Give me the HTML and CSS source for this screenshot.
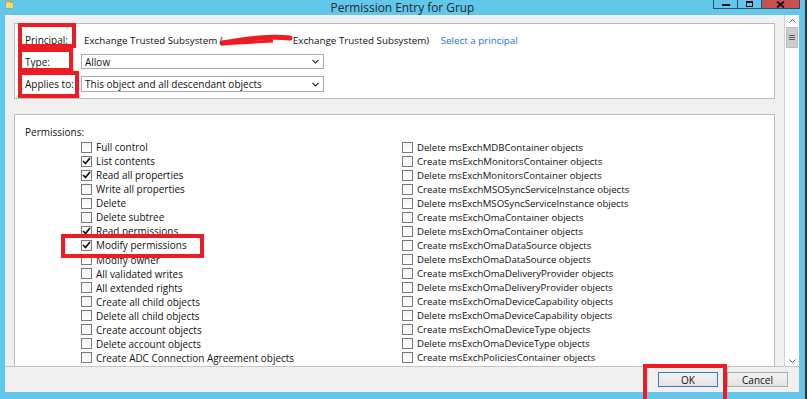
FILE: index.html
```html
<!DOCTYPE html>
<html lang="en">
<head>
    <meta charset="UTF-8">
    <title>Permission Entry for Grup</title>
    <link rel="stylesheet" href="styles.css">
</head>
<body>
    <div class="window">
        <div class="titlebar">
            <div class="title-left">
                <svg class="folder" width="9" height="9" viewBox="0 0 9 9">
                    <path d="M1 1h3l1 1h3v6H1z" fill="#e8c35a" stroke="#b08a2a" stroke-width="0.6"/>
                    <path d="M1 3h7v5H1z" fill="#f5d77a"/>
                </svg>
            </div>
            <div class="title">Permission Entry for Grup</div>
            <div class="caption">
                <div class="cap-btn cap-min"><span></span></div>
                <div class="cap-btn cap-max"><span></span></div>
                <div class="cap-btn cap-close">
                    <svg width="9" height="7" viewBox="0 0 9 7"><path d="M1 0.5l7 6M8 0.5l-7 6" stroke="#111" stroke-width="1.8"/></svg>
                </div>
            </div>
        </div>

        <div class="client">
            <div class="scroll">
                <div class="scroll-content">
                    <div class="group top-group">
                        <div class="field-label">Principal:</div>
                        <div class="principal">
                            Exchange Trusted Subsystem (<span class="redacted"><svg width="74" height="13" viewBox="0 0 74 13"><path d="M3 9c12-2 24-4 37-5 11-1 21-1 31 0" stroke="#ed1c24" stroke-width="5" fill="none" stroke-linecap="round"/><path d="M2 10c16-1 34-2 52-3" stroke="#ed1c24" stroke-width="3" fill="none"/></svg></span>Exchange Trusted Subsystem)
                            <a class="link" href="#">Select a principal</a>
                        </div>

                        <div class="field-label">Type:</div>
                        <div class="combo">
                            <span>Allow</span>
                            <svg width="7" height="5" viewBox="0 0 7 5"><path d="M0.5 0.8l3 3 3-3" stroke="#222" stroke-width="1.2" fill="none"/></svg>
                        </div>

                        <div class="field-label">Applies to:</div>
                        <div class="combo">
                            <span>This object and all descendant objects</span>
                            <svg width="7" height="5" viewBox="0 0 7 5"><path d="M0.5 0.8l3 3 3-3" stroke="#222" stroke-width="1.2" fill="none"/></svg>
                        </div>
                    </div>

                    <div class="group perm-group">
                        <div class="perm-title">Permissions:</div>
                        <div class="perm-list">
                            <div class="perm-col perm-col-left" id="leftCol"></div>
                            <div class="perm-col perm-col-right" id="rightCol"></div>
                        </div>
                    </div>
                </div>

                <div class="scrollbar">
                    <div class="sb-arrow">
                        <svg width="7" height="4" viewBox="0 0 7 4"><path d="M0.5 3.5l3-3 3 3" stroke="#555" fill="none"/></svg>
                    </div>
                    <div class="sb-thumb"><span></span><span></span><span></span></div>
                    <div class="sb-track"></div>
                    <div class="sb-arrow">
                        <svg width="7" height="4" viewBox="0 0 7 4"><path d="M0.5 0.5l3 3 3-3" stroke="#555" fill="none"/></svg>
                    </div>
                </div>
            </div>

            <div class="footer">
                <button class="btn btn-default">OK</button>
                <button class="btn">Cancel</button>
            </div>
        </div>

        <div class="mark mark-principal"></div>
        <div class="mark mark-type"></div>
        <div class="mark mark-applies"></div>
        <div class="mark mark-modify"></div>
        <div class="mark mark-ok"></div>
    </div>

    <script>
        const left = [
            ['Full control', false],
            ['List contents', true],
            ['Read all properties', true],
            ['Write all properties', false],
            ['Delete', false],
            ['Delete subtree', false],
            ['Read permissions', true],
            ['Modify permissions', true],
            ['Modify owner', false],
            ['All validated writes', false],
            ['All extended rights', false],
            ['Create all child objects', false],
            ['Delete all child objects', false],
            ['Create account objects', false],
            ['Delete account objects', false],
            ['Create ADC Connection Agreement objects', false]
        ];
        const right = [
            'Delete msExchMDBContainer objects',
            'Create msExchMonitorsContainer objects',
            'Delete msExchMonitorsContainer objects',
            'Create msExchMSOSyncServiceInstance objects',
            'Delete msExchMSOSyncServiceInstance objects',
            'Create msExchOmaContainer objects',
            'Delete msExchOmaContainer objects',
            'Create msExchOmaDataSource objects',
            'Delete msExchOmaDataSource objects',
            'Create msExchOmaDeliveryProvider objects',
            'Delete msExchOmaDeliveryProvider objects',
            'Create msExchOmaDeviceCapability objects',
            'Delete msExchOmaDeviceCapability objects',
            'Create msExchOmaDeviceType objects',
            'Delete msExchOmaDeviceType objects',
            'Create msExchPoliciesContainer objects'
        ];

        const tick = '<svg width="9" height="8" viewBox="0 0 9 8"><path d="M1 4l2.5 2.5L8 1" stroke="#111" stroke-width="1.7" fill="none"/></svg>';

        function row(label, checked) {
            return '<div class="perm-row"><span class="check">' + (checked ? tick : '') +
                '</span><span>' + label + '</span></div>';
        }

        document.getElementById('leftCol').innerHTML = left.map(i => row(i[0], i[1])).join('');
        document.getElementById('rightCol').innerHTML = right.map(i => row(i, false)).join('');
    </script>
</body>
</html>
```

FILE: styles.css
```css
body {
    margin: 0;
    font-family: "Open Sans", "Noto Sans", sans-serif;
    font-size: 10px;
    color: #111;
    background: #fff;
}

.window {
    position: relative;
    width: 807px;
    height: 399px;
    box-sizing: border-box;
    padding: 0 6px 7px 5px;
    background-color: #62c7ea;
    border-right: 2px solid #2f3a3f;
    display: flex;
    flex-direction: column;
    overflow: hidden;
}

/* title bar */
.titlebar {
    height: 15px;
    margin: 0 -1px 0 -5px;
    padding-left: 5px;
    display: grid;
    grid-template-columns: 1fr auto 1fr;
    align-items: start;
}

.folder {
    display: block;
}

.title {
    font-size: 11.9px;
    line-height: 14px;
    color: #1d2a30;
}

.caption {
    display: flex;
    justify-content: flex-end;
}

.cap-btn {
    height: 8px;
    border: 1px solid #2e4f5c;
    border-top: none;
    display: flex;
    align-items: center;
    justify-content: center;
    box-sizing: content-box;
}

.cap-min,
.cap-max {
    width: 23px;
    border-right: none;
}

.cap-min span {
    width: 8px;
    height: 2px;
    background: #111;
    margin-top: 2px;
}

.cap-max span {
    width: 5px;
    height: 3px;
    border: 1px solid #111;
    border-top-width: 2px;
}

.cap-close {
    width: 37px;
    background: #c75050;
}

/* client area */
.client {
    flex: 1;
    background-color: #f0f0f0;
    display: flex;
    flex-direction: column;
}

.scroll {
    height: 351px;
    display: flex;
    overflow: hidden;
    border-bottom: 1px solid #c4c4c4;
}

.scroll-content {
    flex: 1;
    padding: 8px 9px 0 9px;
}

.group {
    background-color: #fff;
    border: 1px solid #bcbcbc;
}

.top-group {
    box-sizing: content-box;
    padding: 9px 0 0 10px;
    height: 65px;
    display: grid;
    grid-template-columns: 56px 1fr;
    grid-template-rows: 14px 15px 16px;
    row-gap: 7px;
    align-items: center;
}

.principal {
    padding-left: 3px;
    white-space: nowrap;
    font-size: 9.8px;
}

.redacted {
    display: inline-block;
    width: 74px;
    height: 13px;
    vertical-align: -3px;
    margin-left: -4px;
}

.redacted svg {
    display: block;
}

.link {
    color: #2a6fd6;
    text-decoration: none;
    margin-left: 9px;
}

.combo {
    width: 243px;
    height: 100%;
    box-sizing: border-box;
    border: 1px solid #acacac;
    padding: 0 4px 0 3px;
    display: flex;
    align-items: center;
    justify-content: space-between;
}

.perm-group {
    margin-top: 15px;
    height: 300px;
    padding: 10px 0 0 10px;
}

.perm-title {
    line-height: 15px;
}

.perm-list {
    display: flex;
    margin-left: 56px;
}

.perm-col {
    width: 321px;
    display: flex;
    flex-direction: column;
}

.perm-col-left {
    font-size: 9.95px;
}

.perm-col-right {
    font-size: 9.6px;
}

.perm-row {
    height: 14.07px;
    display: flex;
    align-items: center;
    gap: 4px;
    white-space: nowrap;
}

.check {
    width: 9px;
    height: 9px;
    border: 1px solid #7a7a7a;
    background: linear-gradient(#f4f4f4, #ffffff);
    display: flex;
    align-items: center;
    justify-content: center;
    flex-shrink: 0;
}

/* scrollbar */
.scrollbar {
    width: 14px;
    background-color: #fff;
    border-left: 1px solid #d0d0d0;
    display: flex;
    flex-direction: column;
    padding-top: 1px;
}

.sb-arrow {
    height: 10px;
    display: flex;
    align-items: center;
    justify-content: center;
}

.sb-thumb {
    margin: 1px 1px 0 1px;
    height: 21px;
    background-color: #cdcdcd;
    border: 1px solid #bcbcbc;
    box-sizing: border-box;
    display: flex;
    flex-direction: column;
    align-items: center;
    justify-content: center;
    gap: 1px;
}

.sb-thumb span {
    width: 6px;
    height: 1px;
    background: #606060;
}

.sb-track {
    flex: 1;
}

/* footer */
.footer {
    flex: 1;
    display: flex;
    justify-content: flex-end;
    align-items: center;
    gap: 9px;
    padding-right: 11px;
}

.btn {
    font-family: inherit;
    font-size: 10px;
    width: 60px;
    height: 15px;
    padding: 0;
    border: 1px solid #acacac;
    background: linear-gradient(#f2f2f2, #e3e3e3);
    color: #111;
}

.btn + .btn {
    width: 61px;
}

.btn-default {
    border-color: #3c7fb1;
}

/* red annotation boxes */
.mark {
    position: absolute;
    border: 4px solid #ed1c24;
    box-sizing: border-box;
}

.mark-principal { left: 18px; top: 23px; width: 58px; height: 25px; }
.mark-type { left: 18px; top: 48px; width: 55px; height: 24px; }
.mark-applies { left: 18px; top: 71px; width: 61px; height: 27px; }
.mark-modify { left: 61px; top: 234px; width: 143px; height: 24px; }
.mark-ok { left: 643px; top: 364px; width: 84px; height: 40px; }
```
